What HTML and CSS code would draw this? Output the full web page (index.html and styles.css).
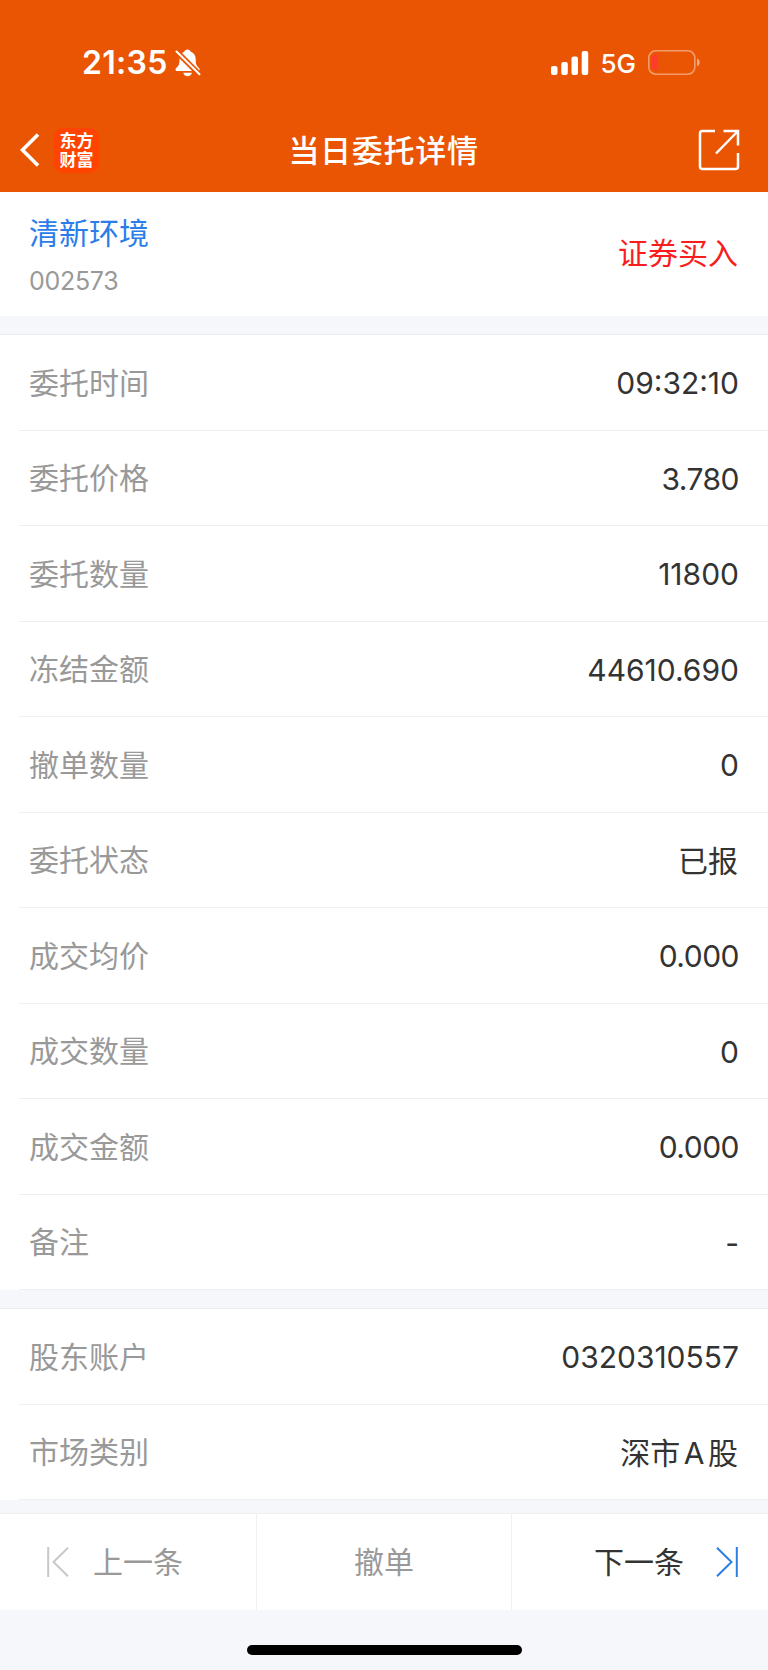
FILE: index.html
```html
<!DOCTYPE html>
<html lang="zh-CN">
<head>
  <meta charset="utf-8">
  <title>当日委托详情</title>
  <link rel="stylesheet" href="styles.css">
</head>
<body>
  <div class="header">
    <div class="status">
      <span class="time">21:35</span>
      <svg class="bell" width="26" height="28" viewBox="0 0 26 28">
        <path fill="#fff" d="M12.5 0.5c1.8 0 3 1 3.4 2.300 3.300 1.200 4.800 4 4.800 7.700 0 5 1 6.500 3.300 8.500 1.300 1.200 0.800 3-0.900 3H2.200c-1.800 0-2.300-1.800-1-3 2.400-2 3.300-3.500 3.300-8.500 0-3.700 1.500-6.500 4.700-7.700C9.600 1.500 10.800 0.500 12.500 0.500z"/>
        <path fill="#fff" d="M8.300 23.700h8.600c-0.500 2.200-2.200 3.600-4.300 3.600s-3.800-1.400-4.300-3.600z"/>
        <path stroke="#ea5504" stroke-width="5.500" d="M0 1l26 26"/>
        <path stroke="#fff" stroke-width="2" stroke-linecap="round" d="M1.500 2.500l23 22.700"/>
      </svg>
      <svg class="signal" width="38" height="24" viewBox="0 0 38 24">
        <g fill="#fff">
          <rect x="0" y="15" width="6.500" height="9" rx="2"/>
          <rect x="10.300" y="11" width="6.500" height="13" rx="2"/>
          <rect x="20.500" y="5.500" width="6.500" height="18.500" rx="2"/>
          <rect x="30.700" y="0" width="6.500" height="24" rx="2"/>
        </g>
      </svg>
      <span class="net">5G</span>
      <svg class="battery" width="52" height="25" viewBox="0 0 52 25">
        <rect x="0.800" y="0.800" width="46" height="23.400" rx="7" fill="none" stroke="#fff" stroke-opacity="0.420" stroke-width="1.600"/>
        <path fill="#fff" fill-opacity="0.500" d="M49 8.500c1.800 0.600 2.700 2.200 2.700 4s-0.900 3.400-2.700 4z"/>
        <path fill="#ff3b30" d="M9.500 4.500v15.500H8c-2.500 0-4.500-1.500-4.500-4.500V9c0-3 2-4.500 4.500-4.500z"/>
      </svg>
    </div>
    <div class="nav">
      <svg class="back" width="20" height="34" viewBox="0 0 20 34">
        <path fill="none" stroke="#fff" stroke-width="3.600" d="M18 1.500L2.500 17 18 32.500"/>
      </svg>
      <div class="logo">东方<br>财富</div>
      <h1>当日委托详情</h1>
      <svg class="share" width="42" height="42" viewBox="0 0 42 42">
        <g fill="none" stroke="#fff" stroke-width="2.500">
          <path d="M17 2.100H4.500a2.500 2.500 0 0 0-2.500 2.500V37.500a2.500 2.500 0 0 0 2.500 2.500H37.500a2.500 2.500 0 0 0 2.500-2.500V24"/>
          <path d="M25.500 2.100H40V16.500M39.500 2.500L18 24.500"/>
        </g>
      </svg>
    </div>
  </div>

  <div class="stock">
    <div>
      <div class="name">清新环境</div>
      <div class="code">002573</div>
    </div>
    <div class="type">证券买入</div>
  </div>

  <ul class="list">
    <li><span>委托时间</span><b>09:32:10</b></li>
    <li><span>委托价格</span><b class="price">3.780</b></li>
    <li><span>委托数量</span><b>11800</b></li>
    <li><span>冻结金额</span><b>44610.690</b></li>
    <li><span>撤单数量</span><b>0</b></li>
    <li><span>委托状态</span><b class="text">已报</b></li>
    <li><span>成交均价</span><b class="price">0.000</b></li>
    <li><span>成交数量</span><b>0</b></li>
    <li><span>成交金额</span><b class="price">0.000</b></li>
    <li><span>备注</span><b>-</b></li>
  </ul>

  <ul class="list account">
    <li><span>股东账户</span><b>0320310557</b></li>
    <li><span>市场类别</span><b class="text">深市<i>A</i>股</b></li>
  </ul>

  <div class="footer">
    <div class="prev">
      <svg width="22" height="30" viewBox="0 0 22 30">
        <path fill="none" stroke="#c8c8c8" stroke-width="2" d="M1.200 0v30M21 0.700L6.500 15 21 29.300"/>
      </svg>
      <span>上一条</span>
    </div>
    <div class="cancel"><span>撤单</span></div>
    <div class="next">
      <span>下一条</span>
      <svg width="22" height="30" viewBox="0 0 22 30">
        <path fill="none" stroke="#2b7de9" stroke-width="2" d="M20.800 0v30M1 0.700L15.500 15 1 29.300"/>
      </svg>
    </div>
  </div>
  <div class="home"></div>
</body>
</html>
```

FILE: styles.css
```css
*{
  margin: 0;
  padding: 0;
  box-sizing: border-box;
}
body{
  width: 768px;
  height: 1670px;
  overflow: hidden;
  background: #f6f7fa;
  color: #333;
  font-family: Inter, "Noto Sans CJK SC", sans-serif;
  font-size: 30px;
}
svg{
  display: block;
  flex: none;
}
.header{
  height: 192px;
  background: #ea5504;
  color: #fff;
}
.status{
  display: flex;
  align-items: center;
  height: 110px;
  padding: 15px 68px 0 82px;
}
.time{
  font-size: 32px;
  font-weight: 600;
  letter-spacing: 0.3px;
}
.bell{
  margin-left: 7px;
}
.signal{
  margin-left: auto;
}
.net{
  margin: 1px 12px 0 11px;
  font-size: 26px;
  font-weight: 500;
}
.nav{
  position: relative;
  display: flex;
  align-items: center;
  height: 82px;
  padding: 0 28px 2px 20px;
}
.logo{
  width: 45px;
  height: 45px;
  margin-left: 14px;
  padding-top: 4px;
  border-radius: 9px;
  background: #ff4400;
  font-size: 17px;
  font-weight: 700;
  line-height: 19px;
  text-align: center;
}
h1{
  flex: 1;
  margin-left: -30px;
  padding-bottom: 4px;
  font-size: 31px;
  font-weight: 500;
  letter-spacing: 0.7px;
  text-align: center;
}
.stock{
  display: flex;
  align-items: center;
  justify-content: space-between;
  height: 124px;
  padding: 0 30px 0 29px;
  background: #fff;
}
.name{
  padding-top: 8px;
  color: #2b7de9;
  line-height: 46px;
}
.code{
  color: #999;
  font-size: 25px;
  letter-spacing: -0.3px;
  line-height: 50px;
}
.type{
  padding-bottom: 6px;
  color: #f91d1d;
}
.list{
  margin-top: 18px;
  border-top: 1px solid #ebebed;
  background: #fff;
  list-style: none;
}
.list li{
  display: flex;
  align-items: center;
  justify-content: space-between;
  height: 95.5px;
  margin-left: 19px;
  padding: 0 29px 0 10px;
  border-bottom: 1px solid #f0f0f2;
}
.list span{
  padding-bottom: 3px;
  color: #999;
}
.list b{
  padding-top: 2px;
  font-weight: 400;
}
.list .price{
  letter-spacing: -0.5px;
}
.list .text{
  padding: 0 1px 2px 0;
}
.list i{
  margin: 0 3.5px;
  font-style: normal;
}
.footer{
  display: grid;
  grid-template-columns: repeat(3, 1fr);
  height: 97px;
  margin-top: 13px;
  border-top: 1px solid #f0f0f2;
  background: #fff;
}
.footer div{
  display: flex;
  align-items: center;
}
.footer span{
  padding-bottom: 4px;
}
.footer .prev{
  padding-left: 47px;
  gap: 24px;
  color: #999;
}
.footer .cancel{
  justify-content: center;
  border: 1px solid #f0f0f2;
  border-width: 0 1px;
  color: #999;
}
.footer .next{
  justify-content: flex-end;
  padding-right: 30px;
  gap: 32px;
}
.home{
  width: 275px;
  height: 10px;
  margin: 35px auto 0;
  border-radius: 5px;
  background: #000;
}
```
